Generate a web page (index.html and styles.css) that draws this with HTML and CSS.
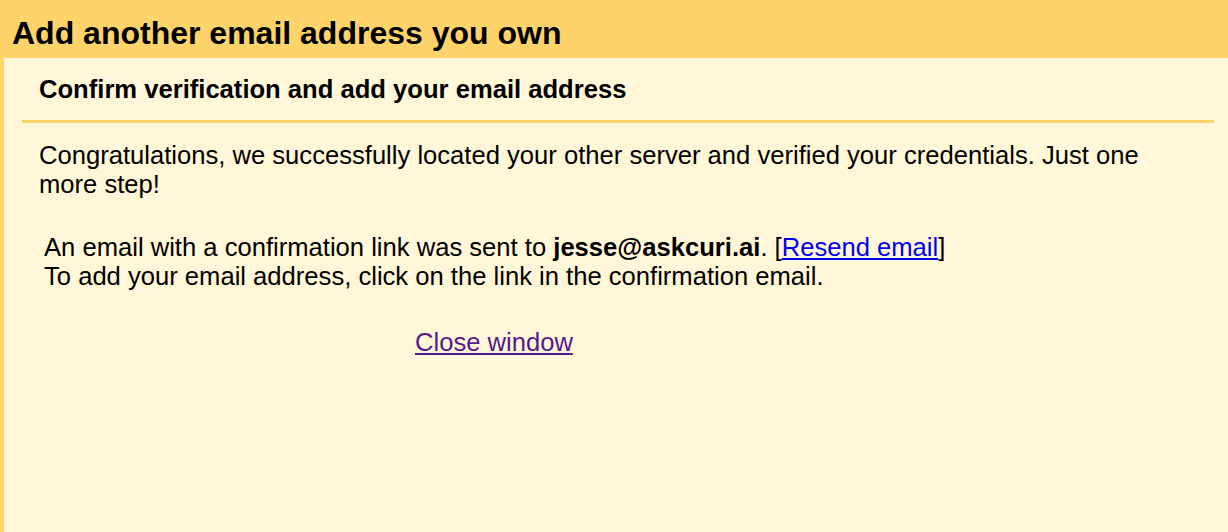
FILE: index.html
```html
<!DOCTYPE html>
<html>
<head>
<meta charset="utf-8">
<link rel="stylesheet" href="styles.css">
</head>
<body>
<div class="page">
  <h1 class="title">Add another email address you own</h1>
  <div class="panel">
    <div class="section">
      <h2 class="subtitle">Confirm verification and add your email address</h2>
      <div class="divider"></div>
      <p class="intro">Congratulations, we successfully located your other server and verified your credentials. Just one more step!</p>
      <div class="notice">
        <p>An email with a confirmation link was sent to <b>jesse@askcuri.ai</b>. [<a class="link" href="#">Resend email</a>]</p>
        <p>To add your email address, click on the link in the confirmation email.</p>
      </div>
      <div class="close-row"><a class="close" href="#">Close window</a></div>
    </div>
  </div>
</div>
</body>
</html>
```
FILE: styles.css
```css
html, body {
  margin: 0;
  padding: 0;
  height: 100%;
}
body {
  font-family: "Liberation Sans", Arial, sans-serif;
  color: #000;
  background: #fdd36a;
}
.page {
  display: flex;
  flex-direction: column;
  height: 100%;
}
.title {
  margin: 0;
  padding: 15px 12px 0;
  height: 58px;
  box-sizing: border-box;
  font-size: 32px;
  font-weight: bold;
  line-height: 36px;
}
.panel {
  flex: 1;
  margin-left: 4px;
  background: #fff7d7;
}
.section {
  padding: 0 14px 0 18px;
}
.subtitle {
  margin: 0;
  padding: 16px 0 0 17px;
  font-size: 25.6px;
  font-weight: bold;
  line-height: 30px;
  height: 62px;
  box-sizing: border-box;
}
.divider {
  height: 3px;
  background: #fdd36a;
}
.intro {
  margin: 0;
  padding: 18px 50px 0 17px;
  font-size: 25.6px;
  line-height: 29px;
}
.notice {
  padding: 34px 0 0 22px;
  font-size: 25.6px;
  line-height: 29px;
}
.notice p {
  margin: 0;
}
.link {
  color: #0000ee;
}
.close-row {
  padding: 37px 0 0 393px;
  font-size: 25.6px;
  line-height: 29px;
}
.close {
  color: #551a8b;
}
```
